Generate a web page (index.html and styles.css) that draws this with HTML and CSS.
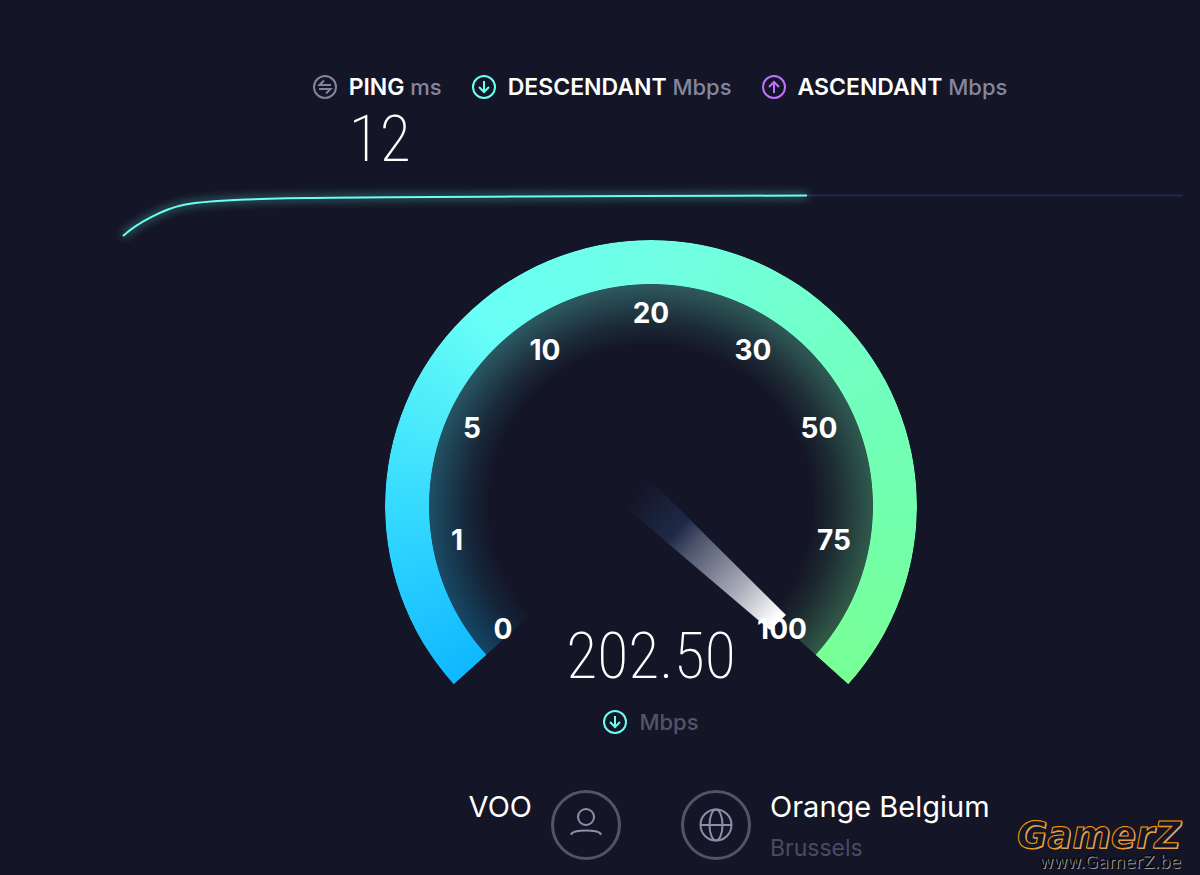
FILE: index.html
```html
<!DOCTYPE html>
<html lang="fr">
<head>
  <meta charset="UTF-8">
  <meta name="viewport" content="width=device-width, initial-scale=1.0">
  <title>Speedtest</title>
  <link rel="stylesheet" href="styles.css">
</head>
<body>
  <main class="speedtest">
    <section class="results">
      <div class="result">
        <svg class="icon icon-ping" viewBox="0 0 24 24">
          <circle cx="12" cy="12" r="11"/>
          <path d="M18 10H6.500L11 5.500M6 14h11.500L13 18.500"/>
        </svg>
        <div class="result-body">
          <h2 class="result-title">PING <span class="unit">ms</span></h2>
          <div class="digits">12</div>
        </div>
      </div>
      <div class="result">
        <svg class="icon icon-down" viewBox="0 0 24 24">
          <circle cx="12" cy="12" r="11"/>
          <path d="M12 6v11M7 12l5 5 5-5"/>
        </svg>
        <h2 class="result-title">DESCENDANT <span class="unit">Mbps</span></h2>
      </div>
      <div class="result">
        <svg class="icon icon-up" viewBox="0 0 24 24">
          <circle cx="12" cy="12" r="11"/>
          <path d="M12 18V7M7 12l5-5 5 5"/>
        </svg>
        <h2 class="result-title">ASCENDANT <span class="unit">Mbps</span></h2>
      </div>
    </section>

    <svg class="progress" viewBox="0 0 1064 56">
      <path class="progress-rest" d="M688 11.500H1064"/>
      <path class="progress-done" d="M4 52C18 39 45 25 64 21C100 12 250 13 688 11.500"/>
    </svg>

    <section class="gauge">
      <div class="gauge-glow"></div>
      <div class="gauge-ring"></div>
      <svg class="gauge-scale" viewBox="0 0 532 532">
        <defs>
          <linearGradient id="needle" gradientUnits="userSpaceOnUse" x1="250" y1="252" x2="390" y2="380">
            <stop offset="0" stop-color="#1e2948" stop-opacity="0"/>
            <stop offset="0.3" stop-color="#1e2948"/>
            <stop offset="0.42" stop-color="#4d546b"/>
            <stop offset="0.75" stop-color="#a9acb8"/>
            <stop offset="1" stop-color="#fff"/>
          </linearGradient>
        </defs>
        <polygon points="239,266 264,239 401,375 385,390" fill="url(#needle)"/>
        <text x="118" y="399">0</text>
        <text x="72" y="310">1</text>
        <text x="87" y="198">5</text>
        <text x="160" y="120">10</text>
        <text x="266" y="83">20</text>
        <text x="368" y="120">30</text>
        <text x="434" y="198">50</text>
        <text x="449" y="310">75</text>
        <text x="397" y="399">100</text>
      </svg>
      <div class="reading">
        <div class="digits">202.50</div>
        <div class="reading-unit">
          <svg class="icon icon-down" viewBox="0 0 24 24">
            <circle cx="12" cy="12" r="11"/>
            <path d="M12 6v11M7 12l5 5 5-5"/>
          </svg>
          <span>Mbps</span>
        </div>
      </div>
    </section>

    <section class="hosts">
      <div class="host host-isp">
        <div class="host-name">VOO</div>
        <svg class="host-icon" viewBox="0 0 70 70">
          <circle class="host-circle" cx="35" cy="35" r="33.500"/>
          <circle cx="35" cy="27" r="8"/>
          <path d="M20.500 45v-1.500C24 39.500 46 39.500 49.500 43.500V45"/>
        </svg>
      </div>
      <div class="host">
        <svg class="host-icon" viewBox="0 0 70 70">
          <circle class="host-circle" cx="35" cy="35" r="33.500"/>
          <circle cx="35" cy="35" r="15.500"/>
          <ellipse cx="35" cy="35" rx="6.500" ry="15.500"/>
          <path d="M19.500 35h31"/>
        </svg>
        <div>
          <div class="host-name">Orange Belgium</div>
          <div class="host-place">Brussels</div>
        </div>
      </div>
    </section>
  </main>

  <div class="watermark">
    <div class="watermark-name">GamerZ</div>
    <div class="watermark-url">www.GamerZ.be</div>
  </div>
</body>
</html>
```

FILE: styles.css
```css
* {
  box-sizing: border-box;
}
body {
  margin: 0;
  min-height: 100vh;
  position: relative;
  background: #141526;
  color: #fff;
  font-family: Inter, "Liberation Sans", sans-serif;
}
svg {
  display: block;
  fill: none;
}
.speedtest {
  padding: 72px 17px 0 119px;
}

/* results */
.results {
  display: flex;
  justify-content: center;
  gap: 30px;
  height: 112px;
  padding-left: 18px;
}
.result {
  display: flex;
  gap: 12px;
}
.result-title {
  margin: 0;
  font-size: 23px;
  font-weight: 600;
  line-height: 30px;
  white-space: nowrap;
}
.unit {
  color: #8486a0;
  font-size: 22px;
  font-weight: 500;
}
.icon {
  flex: none;
  width: 24px;
  height: 24px;
  margin-top: 3px;
  stroke-width: 2;
}
.icon-ping {
  stroke: #83849c;
}
.icon-down {
  stroke: #6afff3;
}
.icon-up {
  stroke: #bf71ff;
}
.digits {
  font-family: "Roboto Condensed", "Open Sans Condensed", Roboto, sans-serif;
  font-size: 64px;
  font-weight: 200;
  line-height: 76px;
}

/* progress line */
.progress {
  width: 100%;
  overflow: visible;
}
.progress-rest {
  stroke: #1f2a48;
  stroke-width: 2;
}
.progress-done {
  stroke: #6afff3;
  stroke-width: 2;
  filter: drop-shadow(0 0 5px #6afff3);
}

/* gauge */
.gauge {
  display: grid;
  width: 532px;
  max-width: 100%;
  aspect-ratio: 1;
  margin: 0 auto;
}
.gauge > * {
  grid-area: 1 / 1;
}
.gauge-ring,
.gauge-glow {
  border-radius: 50%;
  background: conic-gradient(from 228deg, #0fb8ff, #36daff 42deg, #68fff6 90deg, #70ffe6 132deg, #72ffc6 180deg, #72ffae 222deg, #78ff96 264deg, transparent 264.2deg 359.8deg, #0fb8ff);
}
.gauge-ring {
  mask-image: radial-gradient(closest-side, transparent 83.3%, #000 83.6%);
}
.gauge-glow {
  opacity: 0.3;
  mask-image: radial-gradient(closest-side, transparent 60%, rgba(0, 0, 0, 0.3) 69%, #000 84%, transparent 85%);
}
.gauge-scale {
  position: relative;
  width: 100%;
}
.gauge-scale text {
  fill: #fff;
  font-size: 28px;
  font-weight: 700;
  text-anchor: middle;
}
.reading {
  position: relative;
  align-self: end;
  padding-bottom: 35px;
  text-align: center;
}
.reading-unit {
  display: flex;
  justify-content: center;
  gap: 12px;
  margin-top: 12px;
  color: #535467;
  font-size: 22px;
  font-weight: 500;
  line-height: 30px;
}

/* provider and server */
.hosts {
  display: grid;
  grid-template-columns: 1fr 1fr;
  gap: 60px;
  padding: 18px 0 14px;
}
.host {
  display: flex;
  gap: 19px;
}
.host-isp {
  justify-content: flex-end;
}
.host-icon {
  flex: none;
  width: 70px;
  height: 70px;
  stroke: #8d8fa8;
  stroke-width: 2;
}
.host-circle {
  stroke: #535467;
  stroke-width: 3;
}
.host-name {
  font-size: 29px;
  line-height: 34px;
}
.host-place {
  margin-top: 9px;
  color: #4a4b5f;
  font-size: 23px;
  line-height: 30px;
}

/* watermark */
.watermark {
  position: absolute;
  right: 19px;
  bottom: 7px;
  text-align: right;
  font-family: "DejaVu Sans", sans-serif;
}
.watermark-name {
  color: #141526;
  font-size: 37px;
  font-style: italic;
  font-weight: 700;
  line-height: 36px;
  -webkit-text-stroke: 1px #f90;
  text-shadow: 1px 1px 0 #aaa;
}
.watermark-url {
  color: #08080c;
  font-size: 17px;
  line-height: 16px;
  text-shadow: 1px 1px 0 #999;
}
```
